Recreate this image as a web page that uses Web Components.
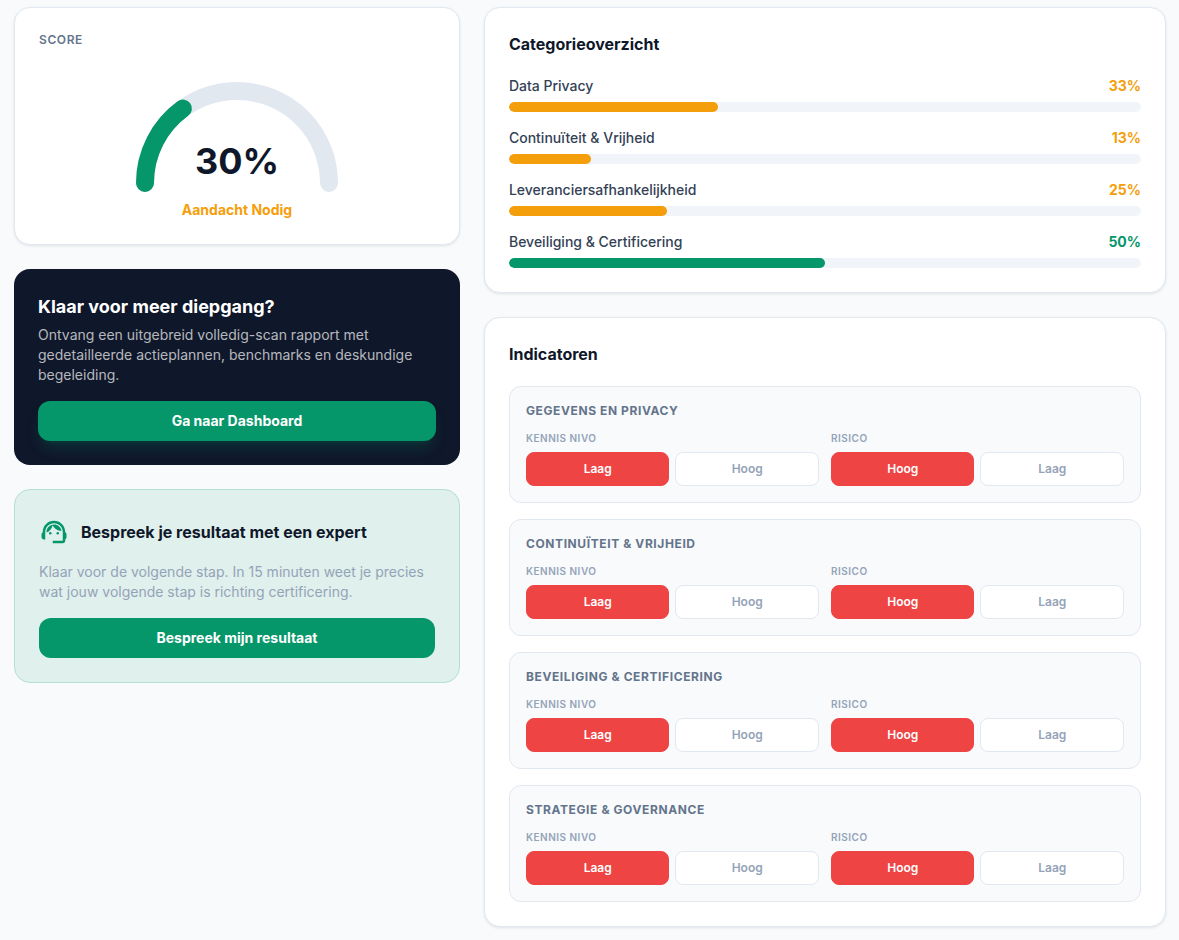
<!DOCTYPE html>
<html lang="nl">
<head>
<meta charset="utf-8">
<meta name="viewport" content="width=device-width, initial-scale=1">
<title>Scanresultaat</title>
<style>
  body {
    --ink: #0f172a;
    --slate: #64748b;
    --muted: #94a3b8;
    --line: #e2e8f0;
    --green: #059669;
    --amber: #f59e0b;
    --red: #ef4444;
    margin: 0;
    background: #f8fafc;
    color: var(--ink);
    font: 400 14px/20px Inter, "Liberation Sans", sans-serif;
  }
</style>
</head>
<body>
<result-page></result-page>

<script>
const define = (name, html, setup) => {
  const template = document.createElement('template');
  template.innerHTML = '<style>*{box-sizing:border-box}h2,h3,p{margin:0}button{font:inherit;cursor:pointer}</style>' + html;
  customElements.define(name, class extends HTMLElement {
    constructor() {
      super();
      this.attachShadow({ mode: 'open' }).append(template.content.cloneNode(true));
    }
    connectedCallback() {
      if (setup) setup(this, this.shadowRoot);
    }
  });
};

define('panel-card', `
  <style>
    :host { display: block; box-sizing: border-box; padding: 24px; border-radius: 16px; background: #fff; border: 1px solid var(--line); box-shadow: 0 1px 3px rgba(15, 23, 42, .1); }
    :host([tone="dark"]) { background: var(--ink); border: 0; box-shadow: none; }
    :host([tone="mint"]) { background: #e0f0ec; border-color: #b4dfd2; box-shadow: none; }
  </style>
  <slot></slot>`);

define('action-button', `
  <style>
    :host { display: block; margin-top: 16px; }
    button { width: 100%; height: 40px; border: 0; border-radius: 12px; background: var(--green); color: #fff; font-weight: 700; padding: 0 16px; }
    :host([raised]) button { box-shadow: 0 10px 15px -3px rgba(5, 150, 105, .2), 0 4px 6px -4px rgba(5, 150, 105, .2); }
  </style>
  <button type="button"><slot></slot></button>`);

define('score-gauge', `
  <style>
    :host { display: block; text-align: center; }
    h2 { font-size: 12px; line-height: 16px; font-weight: 600; letter-spacing: 0.05em; color: var(--slate); text-align: left; }
    .dial { display: grid; justify-items: center; margin-top: 24px; }
    .dial > * { grid-area: 1 / 1; }
    svg { display: block; width: 220px; height: 120px; }
    .value { align-self: end; padding-bottom: 11px; font-size: 36px; line-height: 40px; font-weight: 700; }
    .verdict { margin-top: 8px; font-weight: 700; color: var(--amber); }
  </style>
  <h2>SCORE</h2>
  <div class="dial">
    <svg viewBox="0 0 220 120" fill="none" stroke-width="18" stroke-linecap="round" aria-hidden="true">
      <path d="M18 111A92 92 0 0 1 202 111" stroke="#e2e8f0"/>
      <path class="arc" d="M18 111A92 92 0 0 1 202 111" stroke="#059669" pathLength="100"/>
    </svg>
    <div class="value"></div>
  </div>
  <p class="verdict"><slot></slot></p>`,
  (host, root) => {
    const value = host.getAttribute('value');
    root.querySelector('.value').textContent = value + '%';
    root.querySelector('.arc').setAttribute('stroke-dasharray', value + ' 200');
  });

define('upgrade-promo', `
  <style>
    :host { display: block; }
    h2 { font-size: 18px; line-height: 28px; font-weight: 700; color: #fff; }
    p { margin-top: 4px; color: rgba(255, 255, 255, .7); }
  </style>
  <h2>Klaar voor meer diepgang?</h2>
  <p>Ontvang een uitgebreid volledig-scan rapport met gedetailleerde actieplannen, benchmarks en deskundige begeleiding.</p>
  <action-button raised>Ga naar Dashboard</action-button>`);

define('expert-promo', `
  <style>
    :host { display: block; }
    header { display: flex; align-items: center; gap: 12px; height: 36px; }
    svg { width: 30px; height: 30px; fill: var(--green); flex: none; }
    h2 { font-size: 16px; line-height: 24px; font-weight: 700; }
    p { margin-top: 12px; color: var(--muted); }
  </style>
  <header>
    <svg viewBox="0 0 24 24" aria-hidden="true">
      <path d="M21 12.22C21 6.73 16.74 3 12 3c-4.69 0-9 3.65-9 9.28-.6.34-1 .98-1 1.72v2c0 1.1.9 2 2 2h1v-6.1c0-3.87 3.13-7 7-7s7 3.13 7 7V19h-8v2h8c1.1 0 2-.9 2-2v-1.22c.59-.31 1-.92 1-1.64v-2.3c0-.7-.41-1.31-1-1.62z"/>
      <circle cx="9" cy="13" r="1"/><circle cx="15" cy="13" r="1"/>
      <path d="M18 11.03C17.52 8.18 15.04 6 12.05 6c-3.03 0-6.29 2.51-6.03 6.45 2.47-1.01 4.33-3.21 4.86-5.89 1.31 2.63 4 4.44 7.12 4.47z"/>
    </svg>
    <h2>Bespreek je resultaat met een expert</h2>
  </header>
  <p>Klaar voor de volgende stap. In 15 minuten weet je precies wat jouw volgende stap is richting certificering.</p>
  <action-button>Bespreek mijn resultaat</action-button>`);

define('category-bar', `
  <style>
    :host { display: block; --tone: var(--amber); }
    :host([good]) { --tone: var(--green); }
    .row { display: flex; justify-content: space-between; gap: 16px; margin-bottom: 6px; }
    .name { font-weight: 500; color: #334155; }
    .value { font-weight: 700; color: var(--tone); }
    .track { height: 10px; border-radius: 5px; background: #f1f5f9; overflow: hidden; }
    .fill { height: 100%; border-radius: 5px; background: var(--tone); }
  </style>
  <div class="row"><span class="name" id="name"><slot></slot></span><span class="value"></span></div>
  <div class="track" role="progressbar" aria-labelledby="name" aria-valuemin="0" aria-valuemax="100"><div class="fill"></div></div>`,
  (host, root) => {
    const value = host.getAttribute('value');
    root.querySelector('.value').textContent = value + '%';
    root.querySelector('.fill').style.width = value + '%';
    root.querySelector('.track').setAttribute('aria-valuenow', value);
  });

define('level-choice', `
  <style>
    :host { display: block; }
    .label { font-size: 10px; line-height: 15px; font-weight: 600; letter-spacing: 0.05em; color: var(--muted); }
    .options { display: grid; grid-template-columns: 1fr 1fr; gap: 6px; margin-top: 6px; }
    button { height: 34px; padding: 0 8px; border: 1px solid var(--line); border-radius: 8px; background: #fff; color: var(--muted); font-size: 12px; line-height: 16px; font-weight: 600; }
    button[aria-pressed="true"] { background: var(--red); border-color: var(--red); color: #fff; }
  </style>
  <div class="label" id="label"><slot></slot></div>
  <div class="options" role="group" aria-labelledby="label">
    <button type="button" aria-pressed="true"></button>
    <button type="button" aria-pressed="false"></button>
  </div>`,
  (host, root) => {
    const options = host.getAttribute('options').split(',');
    root.querySelectorAll('button').forEach((button, i) => { button.textContent = options[i]; });
  });

define('indicator-group', `
  <style>
    :host { display: block; box-sizing: border-box; padding: 16px; border: 1px solid var(--line); border-radius: 12px; background: #f8fafc; }
    h3 { font-size: 12px; line-height: 16px; font-weight: 700; letter-spacing: 0.05em; color: var(--slate); }
    .choices { display: grid; grid-template-columns: 1fr 1fr; gap: 12px; margin-top: 12px; }
  </style>
  <h3><slot></slot></h3>
  <div class="choices">
    <level-choice options="Laag,Hoog">KENNIS NIVO</level-choice>
    <level-choice options="Hoog,Laag">RISICO</level-choice>
  </div>`);

define('titled-list', `
  <style>
    :host { display: block; }
    h2 { font-size: 16px; line-height: 24px; font-weight: 700; margin-bottom: 20px; }
    .items { display: grid; gap: 16px; }
  </style>
  <h2><slot name="title"></slot></h2>
  <div class="items"><slot></slot></div>`);

define('result-page', `
  <style>
    :host { display: block; }
    main { display: grid; grid-template-columns: 17fr 26fr; gap: 24px; align-items: start; padding: 7px 13px 13px 14px; }
    .column { display: grid; gap: 24px; min-width: 0; }
    @media (max-width: 800px) { main { grid-template-columns: 1fr; } }
  </style>
  <main>
    <div class="column">
      <panel-card><score-gauge value="30">Aandacht Nodig</score-gauge></panel-card>
      <panel-card tone="dark"><upgrade-promo></upgrade-promo></panel-card>
      <panel-card tone="mint"><expert-promo></expert-promo></panel-card>
    </div>
    <div class="column">
      <panel-card>
        <titled-list>
          <span slot="title">Categorieoverzicht</span>
          <category-bar value="33">Data Privacy</category-bar>
          <category-bar value="13">Continuïteit &amp; Vrijheid</category-bar>
          <category-bar value="25">Leveranciersafhankelijkheid</category-bar>
          <category-bar value="50" good>Beveiliging &amp; Certificering</category-bar>
        </titled-list>
      </panel-card>
      <panel-card>
        <titled-list>
          <span slot="title">Indicatoren</span>
          <indicator-group>GEGEVENS EN PRIVACY</indicator-group>
          <indicator-group>CONTINUÏTEIT &amp; VRIJHEID</indicator-group>
          <indicator-group>BEVEILIGING &amp; CERTIFICERING</indicator-group>
          <indicator-group>STRATEGIE &amp; GOVERNANCE</indicator-group>
        </titled-list>
      </panel-card>
    </div>
  </main>`);
</script>
</body>
</html>
